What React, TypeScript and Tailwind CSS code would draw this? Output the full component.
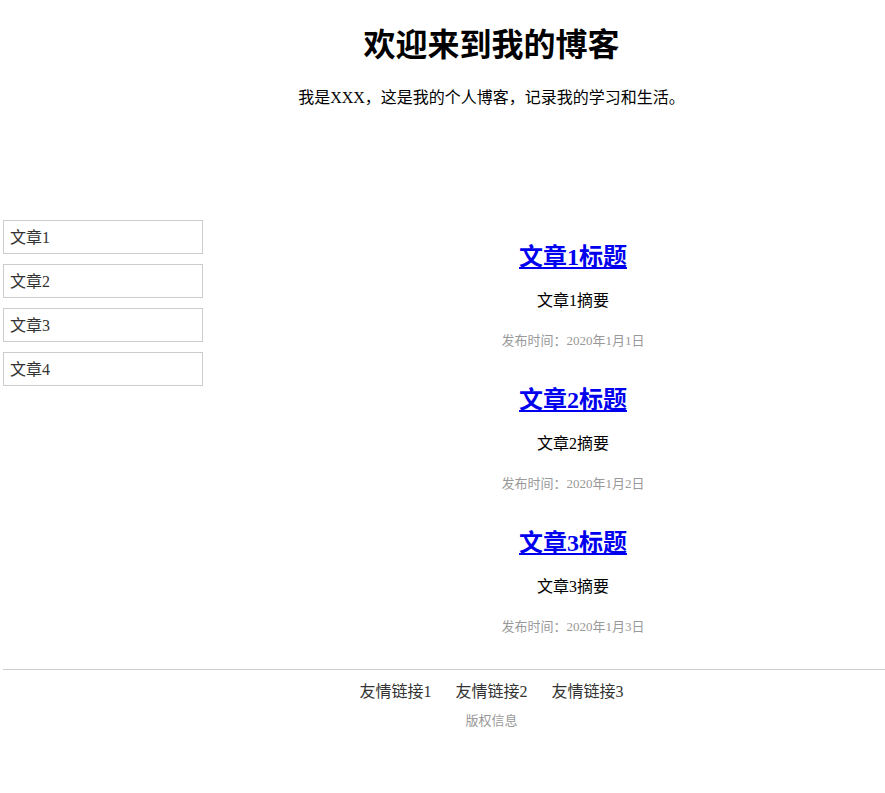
import React from "react";

const font = { fontFamily: '"Liberation Serif", "Noto Sans CJK SC", serif' };

const articles = [
  { t: "文章1标题", s: "文章1摘要", d: "发布时间：2020年1月1日" },
  { t: "文章2标题", s: "文章2摘要", d: "发布时间：2020年1月2日" },
  { t: "文章3标题", s: "文章3摘要", d: "发布时间：2020年1月3日" },
];

export default function App() {
  return (
    <div className="bg-white text-black pl-[3px] min-h-[793px]" style={font}>
      <header className="pl-[95px] text-center">
        <h1 className="pt-[26px] text-[32px] leading-[38px] font-bold">欢迎来到我的博客</h1>
        <p className="mt-[24px] text-[16px] leading-[20px]">我是XXX，这是我的个人博客，记录我的学习和生活。</p>
      </header>
      <div className="flex mt-[112px]">
        <aside className="w-[200px] shrink-0 flex flex-col gap-[10px]">
          {["文章1", "文章2", "文章3", "文章4"].map((x) => (
            <div key={x} className="h-[34px] border border-[#cccccc] pl-[6px] pt-[2px] flex items-center text-[16px] text-[#333333]">
              {x}
            </div>
          ))}
        </aside>
        <main className="flex-1 pl-[58px] pt-[23px] flex flex-col gap-[37px] text-center">
          {articles.map((a) => (
            <article key={a.t} className="flex flex-col">
              <a href="#" className="text-[24px] leading-[28px] font-bold text-[#0000ee] underline">{a.t}</a>
              <p className="mt-[20px] text-[16px] leading-[20px]">{a.s}</p>
              <p className="mt-[22px] text-[13px] leading-[16px] text-[#999999]">{a.d}</p>
            </article>
          ))}
        </main>
      </div>
      <footer className="mt-[34px] border-t border-[#cccccc]">
        <div className="pl-[95px] text-center">
          <div className="mt-[12px] flex justify-center gap-[24px] text-[16px] leading-[20px] text-[#333333]">
            <span>友情链接1</span>
            <span>友情链接2</span>
            <span>友情链接3</span>
          </div>
          <p className="mt-[11px] text-[13px] leading-[16px] text-[#999999]">版权信息</p>
        </div>
      </footer>
    </div>
  );
}
